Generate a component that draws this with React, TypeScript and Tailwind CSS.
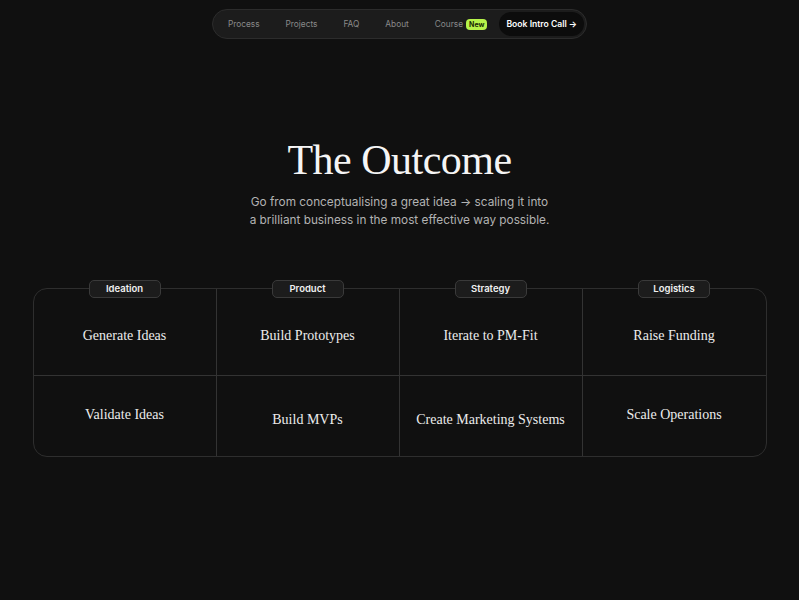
const navItems = ['Process', 'Projects', 'FAQ', 'About'];

const columns = [
  { label: 'Ideation', top: 'Generate Ideas', bottom: 'Validate Ideas', bottomPad: 'pt-[29px]' },
  { label: 'Product', top: 'Build Prototypes', bottom: 'Build MVPs', bottomPad: 'pt-[34px]' },
  { label: 'Strategy', top: 'Iterate to PM-Fit', bottom: 'Create Marketing Systems', bottomPad: 'pt-[34px]' },
  { label: 'Logistics', top: 'Raise Funding', bottom: 'Scale Operations', bottomPad: 'pt-[29px]' },
];

const serif = "font-['Liberation_Serif',serif]";

function App() {
  return (
    <div className="min-h-[600px] w-full bg-[#101010] font-['Inter',sans-serif] text-white">
      {/* Nav pill */}
      <div className="flex justify-center pt-[9px]">
        <nav className="flex h-[30px] items-center rounded-full border border-[#2c2c2c] bg-[#1c1c1c] pl-[15px] pr-[2px]">
          <div className="flex items-center gap-[26px] text-[8.3px] text-[#8a8a8a]">
            {navItems.map((item) => (
              <span key={item}>{item}</span>
            ))}
            <span className="flex items-center gap-[3px]">
              Course
              <span className="rounded-[4px] bg-[#b6f34a] px-[3px] py-[1px] text-[7px] font-bold leading-[9px] text-[#1a2a05]">New</span>
            </span>
          </div>
          <button className="ml-[12px] flex h-[24px] items-center rounded-full bg-[#0c0c0c] px-[7px] text-[8.6px] font-semibold text-white">
            Book Intro Call →
          </button>
        </nav>
      </div>

      {/* Heading */}
      <div className="mt-[99px] flex flex-col items-center text-center">
        <h1 className={`${serif} text-[42px] leading-[44px] tracking-[-0.5px] text-[#f5f5f5]`}>The Outcome</h1>
        <p className="mt-[11px] text-[11.8px] leading-[18px] text-[#b3b3b3]">
          Go from conceptualising a great idea → scaling it into
          <br />a brilliant business in the most effective way possible.
        </p>
      </div>

      {/* Outcome grid */}
      <div className="mx-auto mt-[59px] grid w-[734px] grid-cols-4 rounded-[14px] border border-[#2e2e2e]">
        {columns.map((col, i) => (
          <div key={col.label} className={`relative flex flex-col ${i < 3 ? 'border-r border-[#333333]' : ''}`}>
            <span className="absolute left-1/2 top-[-9px] flex h-[18px] w-[72px] -translate-x-1/2 items-center justify-center rounded-[5px] border border-[#3a3a3a] bg-[#1c1c1c] text-[9.5px] font-semibold text-[#f0f0f0]">
              {col.label}
            </span>
            <div className={`${serif} h-[87px] border-b border-[#333333] pt-[37px] text-center text-[14px] leading-[20px] text-[#ececec]`}>
              {col.top}
            </div>
            <div className={`${serif} h-[80px] ${col.bottomPad} text-center text-[14px] leading-[20px] text-[#ececec]`}>
              {col.bottom}
            </div>
          </div>
        ))}
      </div>
    </div>
  );
}

export default App;
